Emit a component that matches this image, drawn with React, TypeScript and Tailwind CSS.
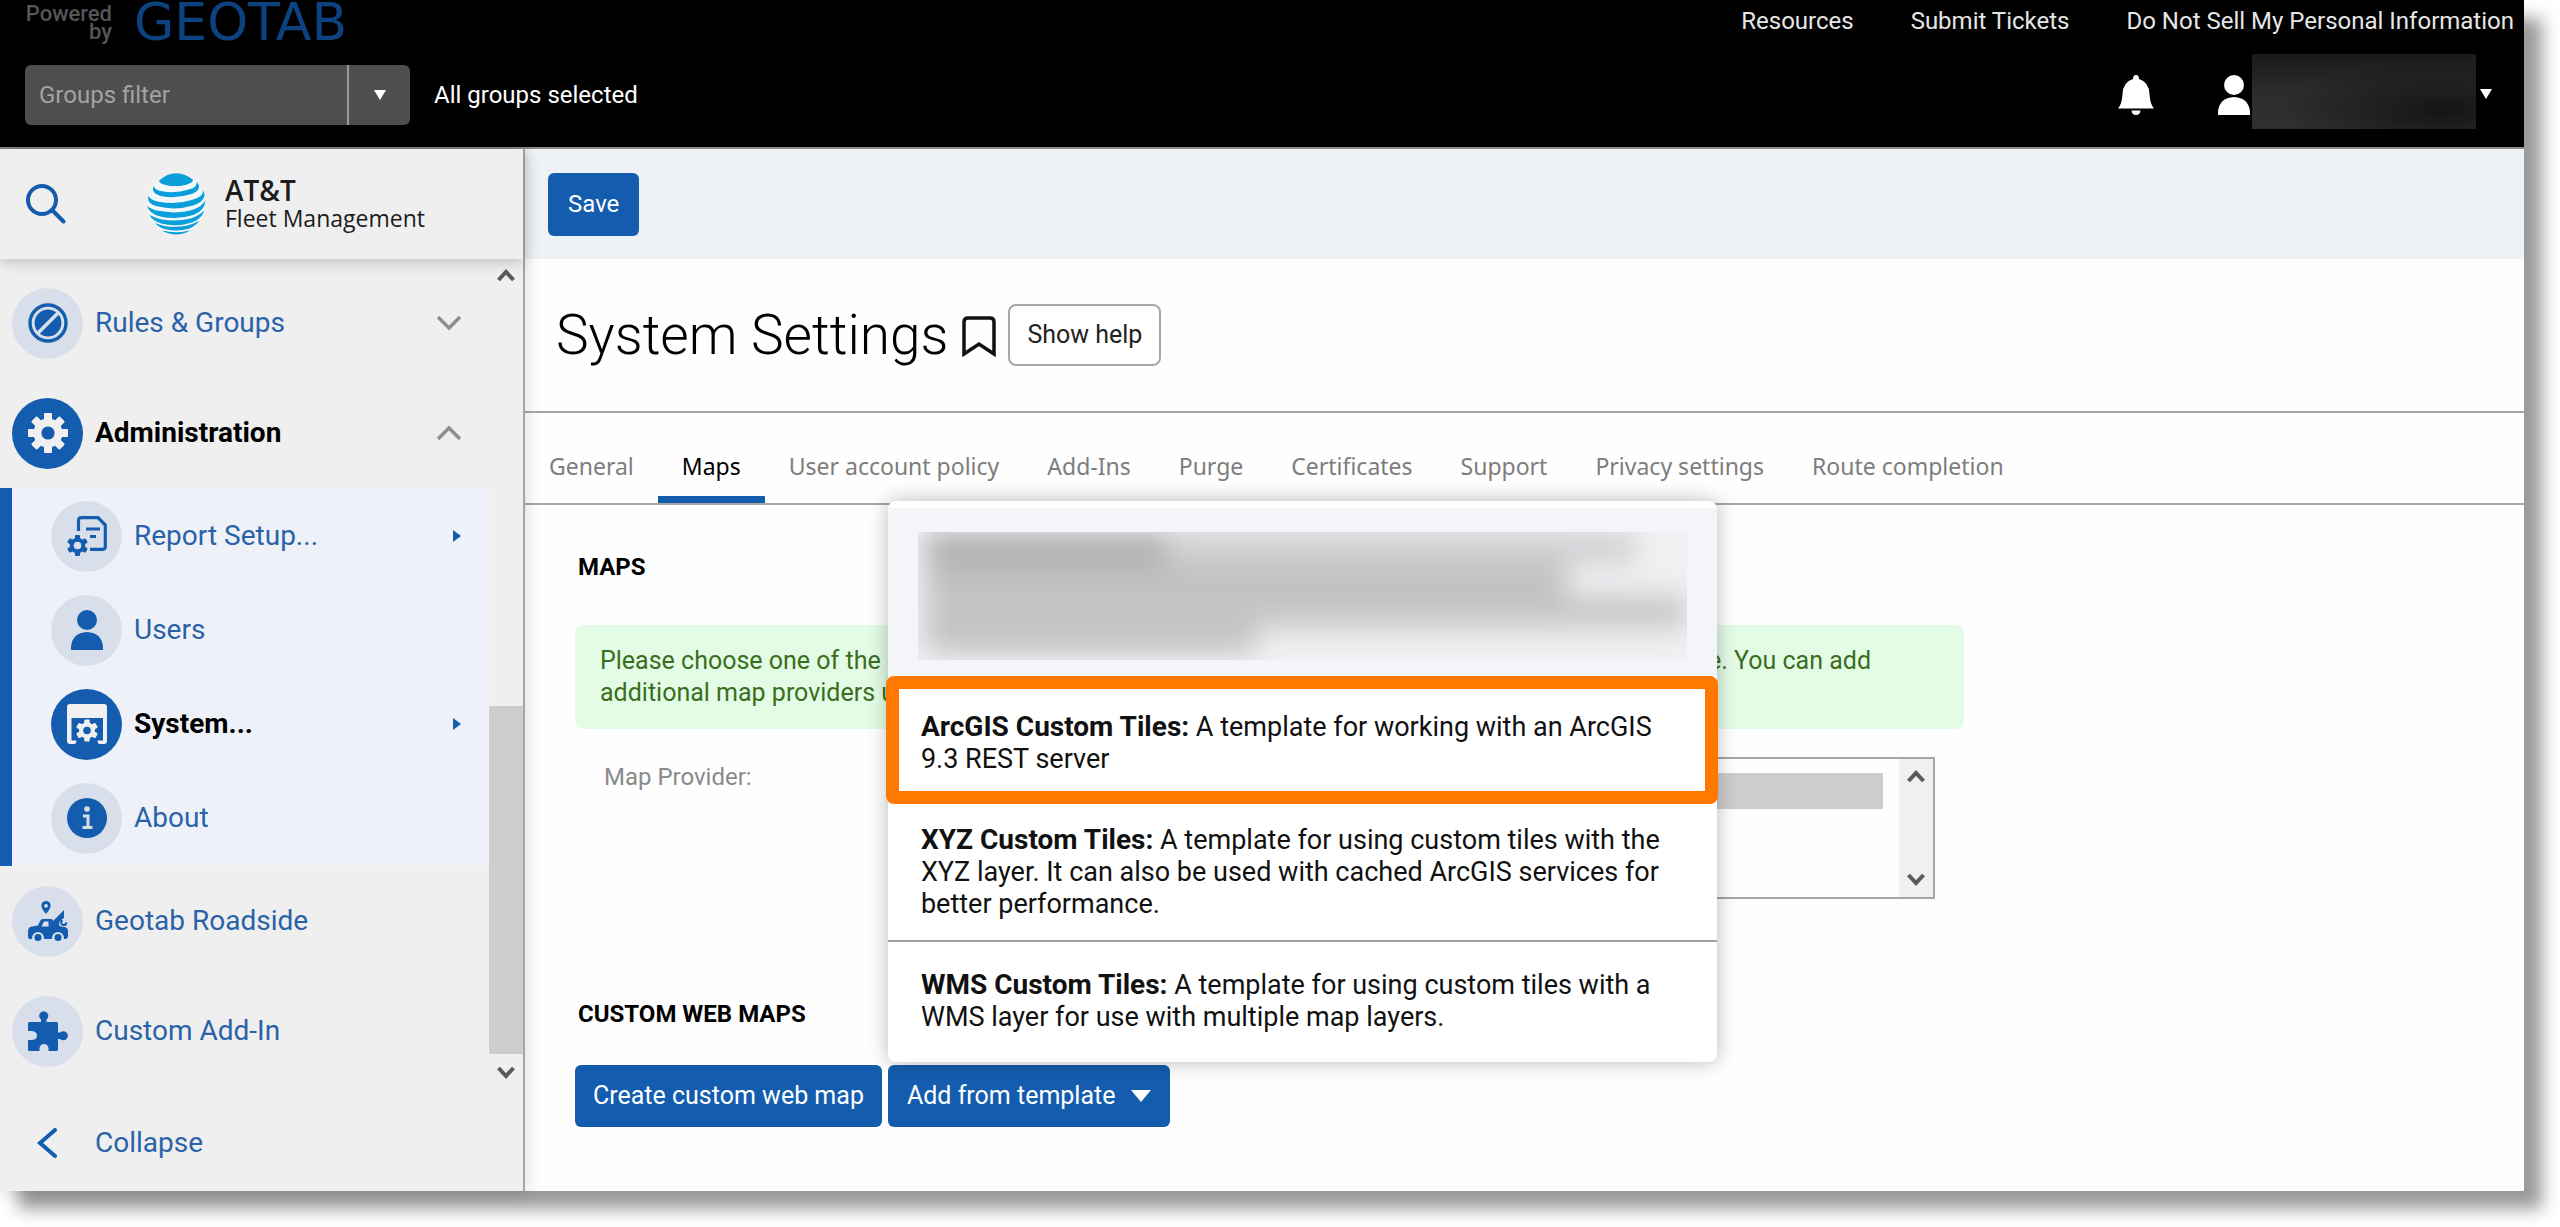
import React from "react";

const teeth8 = [0, 45, 90, 135];
const teeth6 = [0, 60, 120];

function Gear({
  cx,
  cy,
  r,
  hole,
  tooth,
  reach,
  angles,
  color,
  holeColor,
}: {
  cx: number;
  cy: number;
  r: number;
  hole: number;
  tooth: number;
  reach: number;
  angles: number[];
  color: string;
  holeColor: string;
}) {
  return (
    <g fill={color}>
      {angles.map((a) => (
        <rect
          key={a}
          x={cx - tooth / 2}
          y={cy - reach}
          width={tooth}
          height={reach * 2}
          rx={1}
          transform={`rotate(${a} ${cx} ${cy})`}
        />
      ))}
      <circle cx={cx} cy={cy} r={r} />
      <circle cx={cx} cy={cy} r={hole} fill={holeColor} />
    </g>
  );
}

const BLUE = "#145dae";
const PALE = "#d9dfea";

const RulesIcon = () => (
  <svg viewBox="0 0 40 40" className="size-10" aria-hidden="true">
    <circle cx="20" cy="20" r="18" fill="none" stroke={BLUE} strokeWidth="3.4" />
    <circle cx="20" cy="20" r="13.4" fill={BLUE} />
    <path d="M9 31 31 9" stroke={PALE} strokeWidth="3.6" />
  </svg>
);

const AdminIcon = () => (
  <svg viewBox="0 0 40 40" className="size-10" aria-hidden="true">
    <Gear cx={20} cy={20} r={14.5} hole={6.6} tooth={8} reach={20} angles={teeth8} color="#f0f0f0" holeColor={BLUE} />
  </svg>
);

const ReportIcon = () => (
  <svg viewBox="0 0 40 40" className="size-10" aria-hidden="true">
    <path d="M11.5 15V4.500Q11.500 1.700 14.300 1.700H31L38.300 9V30.500Q38.300 33.300 35.500 33.300H23" fill="none" stroke={BLUE} strokeWidth="3.2" />
    <path d="M19 13H33M23 20.500H29" stroke={BLUE} strokeWidth="3" />
    <Gear cx={10.500} cy={29.500} r={7.800} hole={3.800} tooth={5} reach={10.500} angles={teeth6} color={BLUE} holeColor={PALE} />
  </svg>
);

const UserIcon = ({ className = "size-10" }: { className?: string }) => (
  <svg viewBox="0 0 40 40" className={className} fill="currentColor" aria-hidden="true">
    <circle cx="20" cy="10" r="10" />
    <path d="M4 40V37Q5 23 20 22Q35 23 36 37V40Z" />
  </svg>
);

const SystemIcon = () => (
  <svg viewBox="0 0 40 40" className="size-10" aria-hidden="true">
    <path d="M3 0H37Q40 0 40 3V37Q40 40 37 40H33Q30.500 40 30.500 36.500H36V14H4.500V36.500H9.500Q9.500 40 7 40H3Q0 40 0 37V3Q0 0 3 0Z" fill="#f0f0f0" />
    <Gear cx={20} cy={26.500} r={8} hole={3.800} tooth={5.500} reach={11} angles={teeth6} color="#f0f0f0" holeColor={BLUE} />
  </svg>
);

const AboutIcon = () => (
  <svg viewBox="0 0 40 40" className="size-10" aria-hidden="true">
    <circle cx="20" cy="20" r="20" fill={BLUE} />
    <circle cx="20" cy="11" r="2.800" fill={PALE} />
    <path d="M16 18H21V29.500M15.500 29.500H25.500" fill="none" stroke={PALE} strokeWidth="3" />
  </svg>
);

const RoadsideIcon = () => (
  <svg viewBox="0 0 40 40" className="size-10" aria-hidden="true">
    <path d="M18 0a4.600 4.600 0 0 1 4.600 4.600C22.600 8 18 13 18 13S13.400 8 13.400 4.600A4.600 4.600 0 0 1 18 0Z" fill={BLUE} />
    <circle cx="18" cy="4.800" r="1.900" fill={PALE} />
    <path d="M1 38Q0 37 0 35V30Q0 26 4 25.500L10 24.500 12 20Q13 18 15 18H23Q25 18 25 20L36 9V17Q31 20 31 23Q31 25 33 25.500L37 26Q40 27 40 30V35Q40 38 37 38Z" fill={BLUE} />
    <path d="M16 20.500H20.500V25.500H13.500Z" fill={PALE} />
    <path d="M34 19Q32 23 35 24Q38 24.500 38.500 21.500" fill="none" stroke={BLUE} strokeWidth="2" />
    <circle cx="10" cy="37" r="6" fill={PALE} />
    <circle cx="30" cy="37" r="6" fill={PALE} />
    <circle cx="10" cy="36.500" r="3.500" fill={BLUE} />
    <circle cx="30" cy="36.500" r="3.500" fill={BLUE} />
  </svg>
);

const PuzzleIcon = () => (
  <svg viewBox="0 0 40 40" className="size-10" aria-hidden="true">
    <path d="M1.500 11H13V8.500A4.600 4.600 0 1 1 18.500 8.500V11H28.500Q30 11 30 12.500V21.500H32A4.600 4.600 0 1 1 32 28H30V38.500Q30 40 28.500 40H20.500V37.500Q20 33 16 33T11.500 37.500V40H1.500Q0 40 0 38.500V29H4Q9 28.500 9 24.500T4 20H0V12.500Q0 11 1.500 11Z" fill={BLUE} />
  </svg>
);

const Globe = () => (
  <svg viewBox="0 0 176 184" className="h-[62px] w-[59px]" fill="#0a9fdb" aria-hidden="true">
    <ellipse cx="87" cy="92" rx="86" ry="91" fill="#f2f7fa" />
    <path d="M36 22Q60 0 87 0Q115 0 137 20Q140 28 115 35Q85 42 55 35Q35 30 36 22Z" />
    <path d="M20 38Q10 60 45 69Q85 77 130 63Q168 50 149 26Q150 42 125 49Q85 61 45 54Q22 50 20 38Z" />
    <path d="M4 68Q-2 90 30 99Q85 113 140 96Q182 80 168 52Q168 69 140 78Q90 95 35 85Q10 80 4 68Z" />
    <path d="M1 97Q4 120 40 129Q90 141 140 124Q174 110 174 80Q165 100 135 110Q90 123 40 113Q10 108 1 97Z" />
    <path d="M7 124Q15 142 45 151Q90 161 135 147Q165 136 171 111Q155 128 130 135Q90 145 45 138Q20 132 7 124Z" />
    <path d="M24 149Q35 163 55 167Q90 175 125 166Q145 158 156 142Q135 153 120 156Q90 162 55 158Q38 155 24 149Z" />
    <path d="M44 170Q87 196 130 170Q87 182 44 170Z" />
  </svg>
);

const ScrollArrow = ({ down = false }: { down?: boolean }) => (
  <svg viewBox="0 0 18 14" className={down ? "h-[14px] w-[18px] rotate-180" : "h-[14px] w-[18px]"} aria-hidden="true">
    <path d="M1.500 12 9 4 16.500 12" fill="none" stroke="#5a5a5a" strokeWidth="4" />
  </svg>
);

const Caret = ({ className }: { className: string }) => (
  <svg viewBox="0 0 12 10" preserveAspectRatio="none" className={className} fill="currentColor" aria-hidden="true">
    <path d="M0 0H12L6 10Z" />
  </svg>
);

function NavItem({
  icon,
  label,
  active = false,
  sub = false,
  children,
}: {
  icon: React.ReactNode;
  label: string;
  active?: boolean;
  sub?: boolean;
  children?: React.ReactNode;
}) {
  return (
    <button
      type="button"
      className={`flex w-full items-center pr-7 pl-3 text-left text-[28px] leading-8 ${sub ? "h-[94px]" : "h-[110px]"} ${
        active ? "font-bold text-black" : "text-[#2a62a8]"
      }`}
    >
      <span
        className={`mr-3 flex size-[71px] shrink-0 items-center justify-center rounded-full text-[#145dae] ${
          active ? "bg-[#145dae]" : "bg-[#d9dfea]"
        }`}
      >
        {icon}
      </span>
      <span className="flex-1">{label}</span>
      {children}
    </button>
  );
}

const Chevron = ({ up = false }: { up?: boolean }) => (
  <svg viewBox="0 0 24 16" className={up ? "h-4 w-6 rotate-180" : "h-4 w-6"} aria-hidden="true">
    <path d="M1 2 12 13 23 2" fill="none" stroke="#8f8f8f" strokeWidth="3.500" />
  </svg>
);

const RightArrow = () => (
  <svg viewBox="0 0 8 12" className="h-3 w-2" fill={BLUE} aria-hidden="true">
    <path d="M0 0 8 6 0 12Z" />
  </svg>
);

function Header() {
  return (
    <header className="flex h-[149px] shrink-0 justify-between border-b-2 border-[#8a8a8a] bg-black text-white">
      <div className="pl-[25px]">
        <div className="flex h-[65px] gap-[22px] pt-1">
          <span className="w-[87px] pt-px text-right text-[22px] leading-[18px] font-medium text-[#55565a]">
            Powered by
          </span>
          <span className="font-[DejaVu_Sans] text-[52px] leading-9 text-[#0c4280]">GEOTAB</span>
        </div>
        <div className="flex h-[60px] items-center">
          <div className="flex h-full w-[385px] overflow-hidden rounded-md bg-[#4e4e4e]">
            <input
              aria-label="Groups filter"
              placeholder="Groups filter"
              className="w-[324px] border-r-2 border-[#9a9a9a] bg-transparent pl-3.5 text-2xl text-white outline-none placeholder:text-[#a3a3a3]"
            />
            <button type="button" aria-label="Open groups filter" className="flex flex-1 items-center justify-center">
              <Caret className="h-[10px] w-3" />
            </button>
          </div>
          <span className="ml-6 text-2xl">All groups selected</span>
        </div>
      </div>
      <div className="flex flex-col items-end">
        <nav className="flex h-[54px] gap-[57px] pt-[5px] pr-2.5 text-2xl text-[#e6e6e6]">
          <a href="#resources">Resources</a>
          <a href="#tickets">Submit Tickets</a>
          <a href="#privacy">Do Not Sell My Personal Information</a>
        </nav>
        <div className="flex h-[75px] items-center pr-8">
          <button type="button" aria-label="Notifications" className="mr-[60px] pt-1.5">
            <svg viewBox="0 0 36 40" className="h-10 w-9" fill="currentColor" aria-hidden="true">
              <path d="M15 4Q15 0 18 0T21 4Q31 7 31.500 19Q32 29 36 33.500H0Q4 29 4.500 19Q5 7 15 4ZM13.500 35.500H22.500Q22 40 18 40T13.500 35.500Z" />
            </svg>
          </button>
          <button type="button" aria-label="Account" className="flex h-full items-center">
            <UserIcon className="mt-1.5 -mr-0.5 h-10 w-10" />
            <span className="h-full w-56 bg-linear-to-b from-[#1a1a1b] via-[#2c2c2d] to-[#303030]">
              <span className="block h-full bg-radial-[at_85%_75%] from-[#151515] to-transparent to-60%" />
            </span>
            <Caret className="mt-1 ml-1 h-[10px] w-3" />
          </button>
        </div>
      </div>
    </header>
  );
}

function Sidebar() {
  return (
    <aside className="relative z-10 flex w-[525px] shrink-0 flex-col border-r-2 border-[#a6a6a6] bg-[#efefef] shadow-[0_0_16px_rgba(0,0,0,0.16)]">
      <div className="z-10 flex h-[110px] shrink-0 items-center pl-[26px] shadow-[0_4px_12px_rgba(0,0,0,0.18)]">
        <button type="button" aria-label="Search" className="mr-[81px]">
          <svg viewBox="0 0 40 40" className="size-10" fill="none" stroke={BLUE} strokeWidth="4" strokeLinecap="round" aria-hidden="true">
            <circle cx="16" cy="16" r="14" />
            <path d="M26.500 26.500 37.500 37.500" />
          </svg>
        </button>
        <Globe />
        <div className="ml-[19px] font-[Open_Sans] text-[#1c1c1c]">
          <div className="text-[28px] leading-7 font-semibold">AT&amp;T</div>
          <div className="text-[23px] leading-7 font-medium">Fleet Management</div>
        </div>
      </div>
      <div className="flex h-[830px] shrink-0">
        <nav className="flex-1 pt-[9px]">
          <NavItem icon={<RulesIcon />} label="Rules & Groups">
            <Chevron />
          </NavItem>
          <NavItem icon={<AdminIcon />} label="Administration" active>
            <Chevron up />
          </NavItem>
          <div className="border-l-12 border-[#145dae] bg-[#eef2f8] py-px pl-[27px]">
            <NavItem sub icon={<ReportIcon />} label="Report Setup...">
              <RightArrow />
            </NavItem>
            <NavItem sub icon={<UserIcon />} label="Users" />
            <NavItem sub icon={<SystemIcon />} label="System..." active>
              <RightArrow />
            </NavItem>
            <NavItem sub icon={<AboutIcon />} label="About" />
          </div>
          <NavItem icon={<RoadsideIcon />} label="Geotab Roadside" />
          <NavItem icon={<PuzzleIcon />} label="Custom Add-In" />
        </nav>
        <div className="flex w-[34px] flex-col items-center justify-between py-[9px]">
          <ScrollArrow />
          <div className="mt-auto mb-3 h-[348px] w-full bg-[#cdcdcd]" />
          <ScrollArrow down />
        </div>
      </div>
      <button type="button" className="flex flex-1 items-center pt-1.5 pl-[37px] text-[28px] leading-8 text-[#2a62a8]">
        <svg viewBox="0 0 20 30" className="mr-[38px] h-[30px] w-5" fill="none" stroke={BLUE} strokeWidth="4" strokeLinecap="round" aria-hidden="true">
          <path d="M18 2 3 15 18 28" />
        </svg>
        Collapse
      </button>
    </aside>
  );
}

const tabs = [
  "General",
  "Maps",
  "User account policy",
  "Add-Ins",
  "Purge",
  "Certificates",
  "Support",
  "Privacy settings",
  "Route completion",
];

const TemplateName = ({ children }: { children: React.ReactNode }) => <b className="text-[28px]">{children}</b>;

function TemplateMenu() {
  return (
    <div
      role="menu"
      className="absolute bottom-full left-0 z-20 mb-[3px] w-[829px] rounded-lg bg-white pt-[7px] text-[27px] leading-8 text-[#111111] shadow-[0_0_20px_rgba(0,0,0,0.28)]"
    >
      <div className="bg-[#f4f5f8] px-[30px] pt-6 pb-4">
        <div className="h-32 overflow-hidden bg-[#f0f1f3]">
          <div className="blur-[14px]">
            <div className="ml-2 h-8 w-[710px] bg-[#cfd0d2]">
              <div className="h-full w-60 bg-[#aeafb1]" />
            </div>
            <div className="ml-2 h-8 w-[640px] bg-[#bfc0c2]" />
            <div className="ml-2 h-8 w-[760px] bg-[#c4c5c7]" />
            <div className="ml-2 h-6 w-[330px] bg-[#bfc0c2]" />
          </div>
        </div>
      </div>
      <button
        type="button"
        role="menuitem"
        className="-mx-0.5 block w-[832px] rounded-lg border-13 border-[#ff7800] bg-white px-[22px] pt-[22px] pb-4 text-left"
      >
        <TemplateName>ArcGIS Custom Tiles:</TemplateName> A template for working with an ArcGIS 9.3 REST server
      </button>
      <button type="button" role="menuitem" className="block w-full border-b-2 border-[#a0a0a0] px-[33px] pt-5 pb-5 text-left">
        <TemplateName>XYZ Custom Tiles:</TemplateName> A template for using custom tiles with the XYZ layer. It can also be
        used with cached ArcGIS services for better performance.
      </button>
      <button type="button" role="menuitem" className="block w-full px-[33px] pt-[27px] pb-[29px] text-left">
        <TemplateName>WMS Custom Tiles:</TemplateName> A template for using custom tiles with a WMS layer for use with
        multiple map layers.
      </button>
    </div>
  );
}

function Settings() {
  return (
    <main className="min-w-0 flex-1 bg-[#fefefe]">
      <div className="flex h-[110px] items-center bg-[#eef2f7] pl-[23px]">
        <button type="button" className="h-[63px] rounded-md bg-[#145dae] px-5 text-2xl text-white">
          Save
        </button>
      </div>
      <div className="flex h-[154px] items-center border-b-2 border-[#a6a6a6] pl-[31px]">
        <h1 className="text-[55px] leading-[64px] font-light text-black">System Settings</h1>
        <button type="button" aria-label="Bookmark" className="ml-3.5 pt-1">
          <svg viewBox="0 0 34 42" className="h-[42px] w-[34px]" fill="none" stroke="#111111" strokeWidth="3.500" aria-hidden="true">
            <path d="M2 38V6Q2 2 6 2H28Q32 2 32 6V38L17 28Z" />
          </svg>
        </button>
        <button type="button" className="ml-3 h-[62px] rounded-lg border-2 border-[#a6a6a6] bg-white px-[17px] text-[25px] text-[#222222]">
          Show help
        </button>
      </div>
      <div role="tablist" className="flex h-[92px] border-b-2 border-[#a6a6a6] font-[Noto_Sans] text-[23px]">
        {tabs.map((tab) => (
          <button
            key={tab}
            type="button"
            role="tab"
            aria-selected={tab === "Maps"}
            className={`border-b-7 px-6 pt-6 ${tab === "Maps" ? "border-[#145dae] text-black" : "border-transparent text-[#7d7d7d]"}`}
          >
            {tab}
          </button>
        ))}
      </div>
      <div className="px-[50px] pt-[46px]">
        <h2 className="pl-[3px] text-2xl leading-8 font-bold text-black">MAPS</h2>
        <p className="mt-[42px] max-w-[1389px] rounded-lg bg-[#e3fce6] px-[25px] py-5 text-[25px] leading-8 text-[#3a6e1c]">
          Please choose one of the default map providers or a custom map which was created from a template. You can add
          additional map providers using the options below.
        </p>
        <div className="mt-7 flex max-w-[1360px] pl-[29px]">
          <label htmlFor="provider" className="w-[288px] pt-1 text-2xl leading-8 text-[#8a8a8a]">
            Map Provider:
          </label>
          <div className="flex h-[142px] flex-1 border-2 border-[#a6a6a6]">
            <select id="provider" size={3} defaultValue="default" className="flex-1 overflow-hidden bg-transparent px-4 py-3.5 outline-none">
              <option value="default" className="h-9 bg-[#cdcdcd] text-2xl" />
            </select>
            <div className="flex w-[34px] flex-col items-center justify-between bg-[#f0f0f0] py-[10px]">
              <ScrollArrow />
              <ScrollArrow down />
            </div>
          </div>
        </div>
        <h2 className="mt-[99px] pl-[3px] text-2xl leading-8 font-bold text-black">CUSTOM WEB MAPS</h2>
        <div className="mt-[35px] flex gap-1.5 text-[25px] text-white">
          <button type="button" className="h-[62px] rounded-md bg-[#145dae] px-[18px]">
            Create custom web map
          </button>
          <div className="relative">
            <button type="button" aria-haspopup="menu" aria-expanded="true" className="flex h-[62px] items-center rounded-md bg-[#145dae] px-[19px]">
              Add from template
              <Caret className="ml-4 h-3 w-5" />
            </button>
            <TemplateMenu />
          </div>
        </div>
      </div>
    </main>
  );
}

export default function App() {
  return (
    <div className="flex min-h-screen bg-white pr-9 pb-9 font-[Roboto,sans-serif]">
      <div className="flex min-w-0 flex-1 flex-col shadow-[18px_18px_16px_rgba(0,0,0,0.4)]">
        <Header />
        <div className="flex flex-1">
          <Sidebar />
          <Settings />
        </div>
      </div>
    </div>
  );
}
